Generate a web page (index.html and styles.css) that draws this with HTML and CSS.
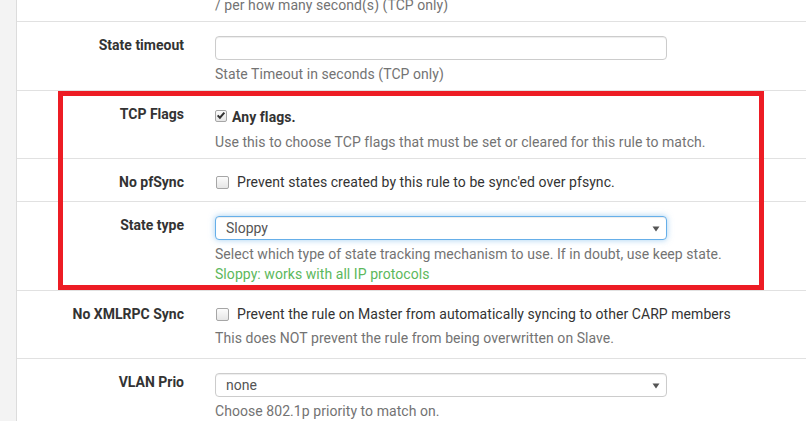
FILE: index.html
```html
<!DOCTYPE html>
<html>
<head>
    <title>Firewall Rule - Advanced Options</title>
    <link rel="stylesheet" href="styles.css">
</head>
<body>
    <div class="page">
        <div class="sidebar"></div>
        <div class="panel">
            <div class="form-row first">
                <div></div>
                <div class="help cut">/ per how many second(s) (TCP only)</div>
            </div>

            <div class="form-row">
                <label class="control-label">State timeout</label>
                <div>
                    <input class="form-control" type="text">
                    <div class="help">State Timeout in seconds (TCP only)</div>
                </div>
            </div>

            <div class="form-row">
                <label class="control-label">TCP Flags</label>
                <div>
                    <div class="check lead">
                        <span class="box">
                            <svg width="11" height="11" viewBox="0 0 11 11"><path d="M1.8 5.4 L4.3 8 L9.2 2.4" fill="none" stroke="#333" stroke-width="2.2"/></svg>
                        </span>
                        <strong>Any flags.</strong>
                    </div>
                    <div class="help lead">Use this to choose TCP flags that must be set or cleared for this rule to match.</div>
                </div>
            </div>

            <div class="form-row pfsync">
                <label class="control-label">No pfSync</label>
                <div>
                    <div class="check">
                        <span class="box"></span>
                        <span>Prevent states created by this rule to be sync'ed over pfsync.</span>
                    </div>
                </div>
            </div>

            <div class="form-row">
                <label class="control-label">State type</label>
                <div>
                    <div class="select-wrap">
                        <select class="form-control focus">
                            <option>Sloppy</option>
                        </select>
                        <svg class="caret" width="8" height="6" viewBox="0 0 8 6"><path d="M0.5 0.5 H7.5 L4 5.5 Z" fill="#555"/></svg>
                    </div>
                    <div class="help">Select which type of state tracking mechanism to use. If in doubt, use keep state.</div>
                    <div class="help ok">Sloppy: works with all IP protocols</div>
                </div>
            </div>

            <div class="form-row xmlrpc">
                <label class="control-label">No XMLRPC Sync</label>
                <div>
                    <div class="check">
                        <span class="box"></span>
                        <span>Prevent the rule on Master from automatically syncing to other CARP members</span>
                    </div>
                    <div class="help">This does NOT prevent the rule from being overwritten on Slave.</div>
                </div>
            </div>

            <div class="form-row last">
                <label class="control-label">VLAN Prio</label>
                <div>
                    <div class="select-wrap">
                        <select class="form-control">
                            <option>none</option>
                        </select>
                        <svg class="caret" width="8" height="6" viewBox="0 0 8 6"><path d="M0.5 0.5 H7.5 L4 5.5 Z" fill="#555"/></svg>
                    </div>
                    <div class="help">Choose 802.1p priority to match on.</div>
                </div>
            </div>
        </div>

        <!-- annotation box -->
        <div class="highlight"></div>
    </div>
</body>
</html>
```

FILE: styles.css
```css
body {
    margin: 0;
    font-family: Roboto, "Liberation Sans", sans-serif;
    font-size: 14px;
    line-height: 20px;
    letter-spacing: 0.06px;
    color: #333;
    background: #fff;
    overflow: hidden;
}
.page {
    position: relative;
    display: flex;
    height: 421px;
}
.sidebar {
    width: 16px;
    background: #f3f3f3;
    border-right: 1px solid #dcdcdc;
}
.panel {
    flex: 1;
    background: #fff;
}
.form-row {
    display: grid;
    grid-template-columns: 167px 1fr;
    column-gap: 31px;
    padding: 13px 0 6px;
    border-bottom: 1px solid #e1e1e1;
    white-space: nowrap;
}
.form-row.first {
    padding: 0 0 6px;
    height: 15px;
}
.form-row.pfsync {
    padding-bottom: 9px;
}
.form-row.xmlrpc {
    padding-bottom: 10px;
}
.form-row.last {
    border-bottom: none;
}
.control-label {
    text-align: right;
    font-weight: bold;
    letter-spacing: 0;
    color: #333;
}
.form-control {
    display: block;
    box-sizing: border-box;
    width: 452px;
    height: 24px;
    margin-top: 1px;
    padding: 0 10px;
    border: 1px solid #ccc;
    border-radius: 4px;
    box-shadow: inset 0 1px 1px rgba(0, 0, 0, .075);
    font-family: inherit;
    font-size: 14px;
    color: #555;
    background: #fff;
    appearance: none;
    -webkit-appearance: none;
    outline: none;
}
.form-control.focus {
    border-color: #66afe9;
    box-shadow: inset 0 1px 1px rgba(0, 0, 0, .075), 0 0 6px rgba(102, 175, 233, .6);
}
.select-wrap {
    position: relative;
    width: 452px;
}
.caret {
    position: absolute;
    right: 7px;
    top: 10px;
}
.help {
    margin-top: 4px;
    color: #737373;
}
.help.cut {
    margin-top: -5px;
}
.help.lead {
    margin-top: 5px;
}
.help.ok {
    margin-top: 0;
    color: #5cb85c;
}
.check {
    display: flex;
    align-items: center;
    gap: 8px;
    color: #333;
}
.check.lead {
    margin-top: 3px;
    gap: 5px;
}
.box {
    display: flex;
    align-items: center;
    justify-content: center;
    box-sizing: border-box;
    width: 13px;
    height: 13px;
    margin-left: 1px;
    border: 1px solid #a6a6a6;
    border-radius: 2px;
    background: linear-gradient(#fcfcfc, #e6e6e6);
}
.check.lead .box {
    margin-left: 0;
    margin-top: -3px;
    width: 12px;
    height: 12px;
}
.highlight {
    position: absolute;
    left: 58px;
    top: 91px;
    width: 706px;
    height: 199px;
    box-sizing: border-box;
    border: 5px solid #ed1c24;
}
```
